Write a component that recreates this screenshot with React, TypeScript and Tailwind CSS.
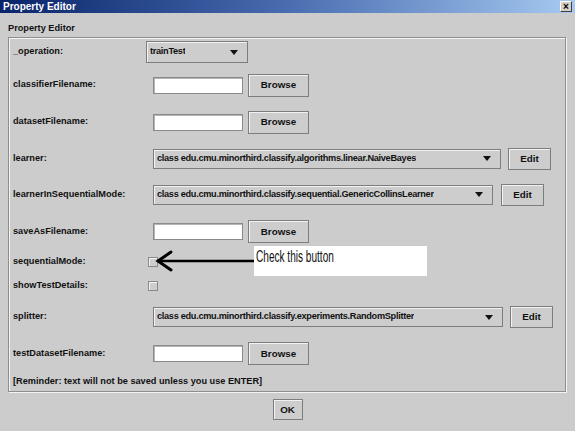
import React from 'react';

// ─── Metal-ish primitives ─────────────────────────────────────────────────────

function Button({ label, w, h = 23 }: { label: string; w: number; h?: number }) {
  return (
    <div
      className="flex items-center justify-center border border-[#7d7d7d] bg-[#cdcdcd] text-[9.8px] font-bold text-[#111] shadow-[inset_1px_1px_0_#f2f2f2]"
      style={{ width: w, height: h }}
    >
      {label}
    </div>
  );
}

function Field() {
  return <div className="h-[17px] w-[90px] border border-[#8a8a8a] bg-white shadow-[inset_1px_1px_0_#b5b5b5]" />;
}

function Combo({ value, w, h = 20 }: { value: string; w: number; h?: number }) {
  return (
    <div
      className="flex items-center justify-between border border-[#7d7d7d] bg-[#cdcdcd] pl-[3px] pr-[9px] font-bold text-[#111] shadow-[inset_1px_1px_0_#f2f2f2]"
      style={{ width: w, height: h }}
    >
      <span className="truncate tracking-[-0.3px]">{value}</span>
      <svg width="8" height="5" viewBox="0 0 8 5" className="shrink-0">
        <path d="M0 0H8L4 5Z" fill="#111" />
      </svg>
    </div>
  );
}

function Check() {
  return <div className="ml-[-5px] h-[10px] w-[10px] border border-[#8a8a8a] bg-[#cdcdcd] shadow-[inset_1px_1px_0_#f2f2f2]" />;
}

function Row({ label, h, children }: { label: string; h: number; children?: React.ReactNode }) {
  return (
    <div className="flex items-center" style={{ height: h }}>
      <div className="w-[144px] shrink-0 pl-[4px] font-bold text-[#111]">{label}</div>
      <div className="flex items-center gap-[5px]">{children}</div>
    </div>
  );
}

// ─── Dialog ───────────────────────────────────────────────────────────────────

export default function App() {
  return (
    <div className="relative h-[431px] w-[575px] overflow-hidden bg-[#cccccc] font-['Liberation_Sans',Arial,sans-serif] text-[9.2px] leading-none">
      {/* Title bar */}
      <div className="flex h-[13px] items-center justify-between bg-linear-to-r from-[#0a246a] via-[#4a6db0] to-[#a6caf0] pl-[3px] pr-[3px]">
        <span className="text-[10px] font-bold text-white">Property Editor</span>
        <div className="flex h-[11px] w-[12px] items-center justify-center border border-t-white border-l-white border-r-[#404040] border-b-[#404040] bg-[#d4d0c8] text-[10px] font-bold text-black">
          ×
        </div>
      </div>

      {/* Heading */}
      <div className="flex h-[24px] items-end pb-[4px] pl-[8px] font-bold text-[#111]">Property Editor</div>

      {/* Etched panel */}
      <div className="ml-[8px] w-[558px] border border-[#8e8e8e] shadow-[inset_1px_1px_0_#f4f4f4,1px_1px_0_#f4f4f4]">
        <Row label="_operation:" h={28}>
          <div className="ml-[-7px]">
            <Combo value="trainTest" w={102} h={22} />
          </div>
        </Row>
        <Row label="classifierFilename:" h={38}>
          <Field />
          <Button label="Browse" w={61} />
        </Row>
        <Row label="datasetFilename:" h={36}>
          <Field />
          <Button label="Browse" w={61} />
        </Row>
        <Row label="learner:" h={37}>
          <Combo value="class edu.cmu.minorthird.classify.algorithms.linear.NaiveBayes" w={348} />
          <div className="ml-[2px]">
            <Button label="Edit" w={43} h={22} />
          </div>
        </Row>
        <Row label="learnerInSequentialMode:" h={35}>
          <Combo value="class edu.cmu.minorthird.classify.sequential.GenericCollinsLearner" w={340} />
          <div className="ml-[3px]">
            <Button label="Edit" w={43} h={22} />
          </div>
        </Row>
        <Row label="saveAsFilename:" h={39}>
          <Field />
          <Button label="Browse" w={61} />
        </Row>
        <Row label="sequentialMode:" h={22}>
          <Check />
        </Row>
        <Row label="showTestDetails:" h={26}>
          <Check />
        </Row>
        <Row label="splitter:" h={36}>
          <Combo value="class edu.cmu.minorthird.classify.experiments.RandomSplitter" w={350} />
          <div className="ml-[2px]">
            <Button label="Edit" w={43} h={22} />
          </div>
        </Row>
        <Row label="testDatasetFilename:" h={37}>
          <Field />
          <Button label="Browse" w={61} />
        </Row>
        <div className="flex h-[19px] items-center pl-[4px] font-bold text-[#111]">
          [Reminder: text will not be saved unless you use ENTER]
        </div>
      </div>

      {/* Footer */}
      <div className="flex justify-center pt-[7px]">
        <Button label="OK" w={30} h={21} />
      </div>

      {/* Annotation overlay */}
      <div className="absolute left-[254px] top-[246px] h-[30px] w-[173px] bg-white pl-[2px] pt-[3px]">
        <span className="inline-block origin-left scale-x-[0.63] text-[16px] text-[#111]">Check this button</span>
      </div>
      <svg className="absolute left-[154px] top-[249px]" width="102" height="24" viewBox="0 0 102 24">
        <path d="M4 12H100" stroke="#000" strokeWidth="2.5" />
        <path d="M17 3L4 12L17 21" fill="none" stroke="#000" strokeWidth="3" strokeLinecap="round" />
      </svg>
    </div>
  );
}
